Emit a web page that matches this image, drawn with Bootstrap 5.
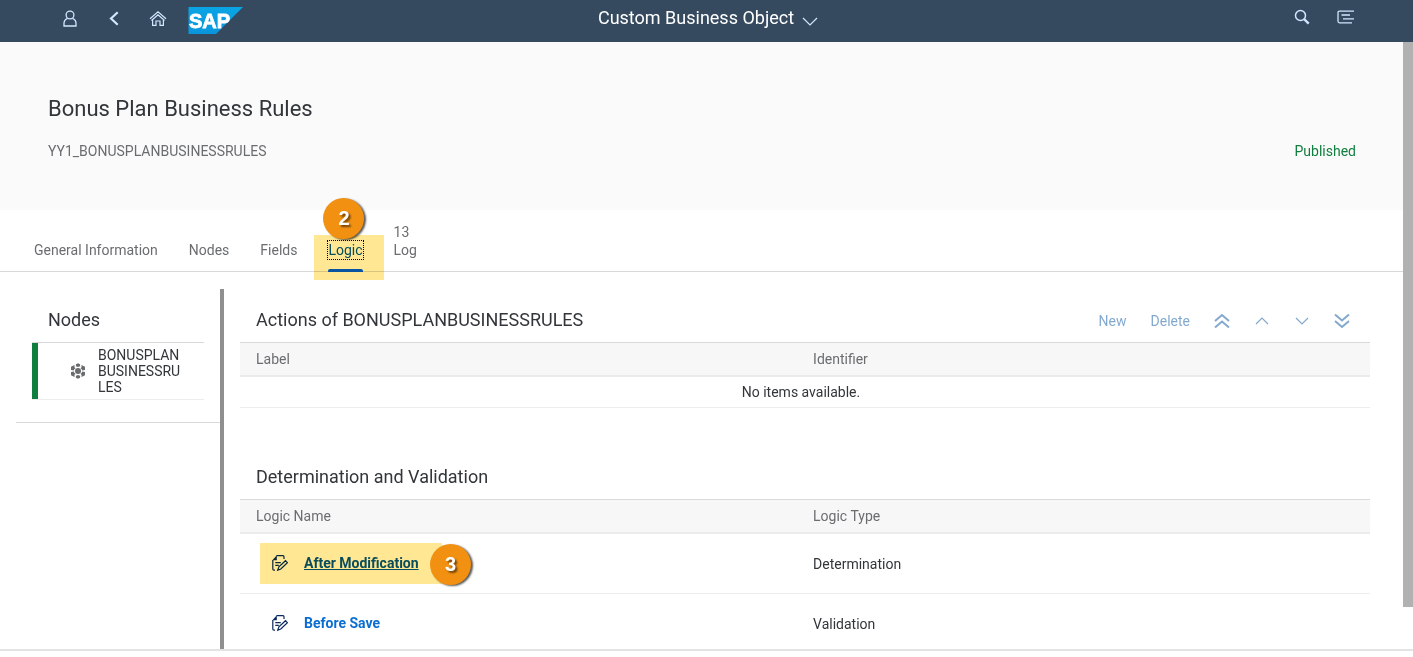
<!DOCTYPE html>
<html lang="en">
<head>
<meta charset="utf-8">
<meta name="viewport" content="width=device-width, initial-scale=1">
<title>Custom Business Object</title>
<link href="https://cdn.jsdelivr.net/npm/bootstrap@5.3.0/dist/css/bootstrap.min.css" rel="stylesheet">
<style>
  body { font-family: Roboto, "Liberation Sans", sans-serif; font-size: 14px; line-height: 18px; color: #32363a; background: #fff; }
  .shell { background: #354a5f; height: 42px; padding: 0 53px 0 56px; color: #d1e8ff; }
  .shell-side { flex: 1 1 0; gap: 16px; }
  .icon-btn { border: 0; background: none; padding: 0; color: inherit; width: 28px; height: 28px; display: flex; align-items: center; justify-content: center; }
  .shell-title { border: 0; background: none; padding: 0 0 6px; color: #fff; font-size: 18px; line-height: 24px; font-weight: 400; }
  .viewport-area { border-bottom: 2px solid #e3e3e3; margin-bottom: 6px; min-height: 0; }
  .scroll-track { width: 10px; }
  .scroll-thumb { height: 93%; background: #b1b1b1; }
  .object-head { background: #fafafa; height: 168px; padding: 53px 47px 0 48px; }
  .object-head h1 { font-size: 22px; line-height: 28px; font-weight: 400; margin: 0 0 19px; }
  .subtle { color: #6a6d70; }
  .state-ok { color: #107e3e; }
  .tabs { height: 62px; padding: 0 34px; gap: 31px; border-bottom: 1px solid #d9d9d9; align-items: flex-end; }
  .tab { color: #6a6d70; text-decoration: none; position: relative; padding-bottom: 12px; display: block; }
  .tab.active { color: #0854a0; }
  .tab.active > span { outline: 1px dotted #000; display: block; }
  .tab.active::after { content: ""; position: absolute; left: 0; right: 0; bottom: -1px; height: 3px; background: #0854a0; border-radius: 2px 2px 0 0; }
  .marker { position: absolute; background: #ffe794; mix-blend-mode: multiply; pointer-events: none; }
  .marker-tab { left: -14px; right: -21px; top: -6px; height: 45px; }
  .marker-row { left: 20px; width: 182px; top: 9px; height: 41px; }
  .step { position: absolute; width: 41px; height: 41px; border-radius: 50%; background: #f29111; color: #fff; font: bold 20px/41px "Liberation Sans", sans-serif; text-align: center; text-shadow: 2px 2px 2px rgba(0,0,0,.55); box-shadow: 2px 1px 2px rgba(0,0,0,.65); }
  .step-tab { left: -5px; top: -43px; }
  .step-row { left: 190px; top: 10px; }
  .work { padding-top: 17px; min-height: 0; overflow: hidden; }
  .pane-left { width: 204px; margin-left: 16px; }
  .pane-nodes { border-bottom: 1px solid #d9d9d9; padding: 0 16px 22px; }
  .section-title { font-size: 18px; line-height: 24px; font-weight: 400; margin: 0; }
  .node-item { border-top: 1px solid #d9d9d9; border-bottom: 1px solid #ededed; height: 58px; color: #32363a; text-decoration: none; line-height: 16px; }
  .node-bar { width: 6px; background: #107e3e; align-self: stretch; }
  .node-icon { margin-left: 32px; }
  .node-name { width: 88px; margin-left: 12px; overflow-wrap: anywhere; }
  .splitter { width: 4px; background: #8f8f8f; }
  .pane-right { padding: 0 33px 0 16px; min-width: 0; }
  .title-row { height: 53px; padding: 8px 16px 0; }
  .tools { gap: 24px; color: #0854a0; opacity: .5; padding-top: 2px; }
  .tools button { border: 0; background: none; padding: 0; color: inherit; line-height: 20px; }
  .tools .arrow { width: 16px; height: 20px; display: flex; align-items: center; justify-content: center; }
  .grid-table { width: 100%; table-layout: fixed; border-collapse: separate; border-spacing: 0; border-top: 1px solid #d9d9d9; }
  .grid-table th { font-weight: 400; color: #6a6d70; background: #f7f7f7; height: 34px; padding: 0 16px; border-bottom: 2px solid #ebebeb; }
  .grid-table th:first-child { width: 49.3%; }
  .grid-table td { padding: 0 16px; border-bottom: 1px solid #ededed; }
  .row-empty td { height: 31px; padding: 0 24px 0 16px; }
  .row-logic td { height: 60px; }
  .row-logic a { font-weight: 700; text-decoration: none; color: #0a6ed1; }
  .row-logic a.hovered { color: #0854a0; text-decoration: underline; }
  .logic-cell { padding: 0 0 2px 16px; gap: 16px; }
  .second { margin-top: 38px; }
</style>
<script src="https://cdn.jsdelivr.net/npm/bootstrap@5.3.0/dist/js/bootstrap.bundle.min.js"></script>
</head>
<body class="vh-100 d-flex flex-column overflow-hidden">
<svg class="d-none" aria-hidden="true">
  <symbol id="edit-doc" viewBox="0 0 16 16"><path d="M4.500.7H11q1 0 1 1v2.300M.8 5v9q0 1.200 1.200 1.200H3" fill="none" stroke="currentColor" stroke-width="1.200"/><path d="M.4 5.300 4.800.3V5.300Z" fill="currentColor"/><path d="M3.300 7.700h5.500M3.300 10.300h3.500M5.700 15.200l1.200-3.300 6.600-6.200 1.900 2-6.600 6.300Z" fill="none" stroke="currentColor" stroke-width="1.200"/></symbol>
</svg>

<header class="shell d-flex align-items-center flex-shrink-0">
  <div class="shell-side d-flex align-items-center pb-1">
    <button class="icon-btn" aria-label="Profile"><svg width="16" height="18" viewBox="0 0 16 18" fill="none" stroke="currentColor" stroke-width="1.300"><circle cx="8" cy="5" r="3.900"/><path d="M5.500 8.300Q2 9.700 2 13.200V16H14V13.200Q14 9.700 10.500 8.300"/></svg></button>
    <button class="icon-btn" aria-label="Back"><svg width="12" height="16" viewBox="0 0 12 16" fill="none" stroke="currentColor" stroke-width="2.200"><path d="M9.700 1.200 3 7.500l6.700 6.300"/></svg></button>
    <button class="icon-btn" aria-label="Home"><svg width="18" height="16" viewBox="0 0 18 16" fill="none" stroke="currentColor" stroke-width="1.200"><path d="M1 7.700 9 .8l8 6.900M2.500 9.500 9 3.800 15.500 9.500M3.600 8.500v5.900H7V10h4v4.400h3.400V8.500"/></svg></button>
    <svg class="mt-1" width="55" height="28" viewBox="0 0 55 28" role="img" aria-label="SAP"><defs><linearGradient id="sapfill" x2="0" y2="1"><stop stop-color="#0aa5e5"/><stop offset="1" stop-color="#0a95dc"/></linearGradient></defs><path d="M.5 0H55L28 27H.5Z" fill="url(#sapfill)"/><text x="1" y="21" fill="#fff" stroke="#fff" stroke-width=".8" font-family="Liberation Sans, sans-serif" font-size="20" font-weight="700">SAP</text></svg>
  </div>
  <button class="shell-title d-flex align-items-center gap-2">Custom Business Object
    <svg width="16" height="10" viewBox="0 0 16 10" fill="none" stroke="#d1e8ff" stroke-width="1.200" class="mt-2"><path d="M1 1 8 8l7-7"/></svg></button>
  <div class="shell-side d-flex align-items-center justify-content-end pb-2">
    <button class="icon-btn" aria-label="Search"><svg width="16" height="16" viewBox="0 0 16 16" fill="none" stroke="currentColor"><circle cx="6.500" cy="6.500" r="5" stroke-width="1.500"/><path d="m10 10 4.700 4.700" stroke-width="2.400"/></svg></button>
    <button class="icon-btn" aria-label="Menu"><svg width="18" height="14" viewBox="0 0 18 14" fill="none" stroke="currentColor" stroke-width="1.300"><path d="M17 1.200H2.500Q1 1.200 1 2.700v8.600q0 1.500 1.500 1.500H15M4.500 5H13M6 8.800h11"/></svg></button>
  </div>
</header>

<div class="viewport-area d-flex flex-grow-1">
  <main class="d-flex flex-column flex-grow-1">
    <section class="object-head flex-shrink-0">
      <h1>Bonus Plan Business Rules</h1>
      <div class="d-flex justify-content-between">
        <span class="subtle">YY1_BONUSPLANBUSINESSRULES</span>
        <span class="state-ok">Published</span>
      </div>
    </section>

    <nav class="tabs d-flex flex-shrink-0" aria-label="Sections">
      <a class="tab" href="#general">General Information</a>
      <a class="tab" href="#nodes">Nodes</a>
      <a class="tab" href="#fields">Fields</a>
      <a class="tab active" href="#logic"><span>Logic</span><i class="marker marker-tab"></i><b class="step step-tab">2</b></a>
      <a class="tab" href="#log">13<br>Log</a>
    </nav>

    <div class="work d-flex flex-grow-1" id="logic">
      <aside class="pane-left flex-shrink-0">
        <div class="pane-nodes">
          <div class="title-row d-flex align-items-center"><h2 class="section-title">Nodes</h2></div>
          <a class="node-item d-flex align-items-center" href="#node">
            <span class="node-bar"></span>
            <svg class="node-icon flex-shrink-0" width="16" height="16" viewBox="0 0 16 16" fill="#6a6d70"><circle cx="8" cy="8" r="3"/><path d="M5.900 1.300 8 .2l2.100 1.100v1.900L8 4 5.900 3.200ZM5.900 12.800 8 12l2.100.8v1.900L8 15.800l-2.100-1.100Z"/><path d="m1 3.700 3.500-1.600v2.200l1 .9-1.400 1.200L3.800 7.500 1 7ZM15 3.700l-3.500-1.600v2.200l-1 .9 1.400 1.200.3 1.100L15 7ZM1 12.300l3.500 1.600v-2.200l1-.9-1.400-1.200-.3-1.100L1 9ZM15 12.300l-3.500 1.600v-2.200l-1-.9 1.400-1.200.3-1.100L15 9Z"/></svg>
            <span class="node-name">BONUSPLANBUSINESSRULES</span>
          </a>
        </div>
      </aside>
      <div class="splitter flex-shrink-0"></div>
      <div class="pane-right flex-grow-1">
        <section>
          <div class="title-row d-flex align-items-center justify-content-between">
            <h2 class="section-title">Actions of BONUSPLANBUSINESSRULES</h2>
            <div class="tools d-flex align-items-center me-1">
              <button>New</button>
              <button>Delete</button>
              <button class="arrow" aria-label="Move to top"><svg width="16" height="16" viewBox="0 0 16 16" fill="none" stroke="currentColor" stroke-width="2"><path d="m1 8 7-6 7 6M1 14.500l7-6 7 6"/></svg></button>
              <button class="arrow" aria-label="Move up"><svg width="14" height="8" viewBox="0 0 14 8" fill="none" stroke="currentColor" stroke-width="1.200"><path d="m1 7 6-6 6 6"/></svg></button>
              <button class="arrow" aria-label="Move down"><svg width="14" height="8" viewBox="0 0 14 8" fill="none" stroke="currentColor" stroke-width="1.200"><path d="m1 1 6 6 6-6"/></svg></button>
              <button class="arrow" aria-label="Move to bottom"><svg width="16" height="16" viewBox="0 0 16 16" fill="none" stroke="currentColor" stroke-width="2"><path d="m1 1.500 7 6 7-6M1 8l7 6 7-6"/></svg></button>
            </div>
          </div>
          <table class="grid-table">
            <thead><tr><th scope="col">Label</th><th scope="col">Identifier</th></tr></thead>
            <tbody><tr class="row-empty"><td colspan="2" class="text-center">No items available.</td></tr></tbody>
          </table>
        </section>
        <section class="second">
          <div class="title-row d-flex align-items-center"><h2 class="section-title">Determination and Validation</h2></div>
          <table class="grid-table">
            <thead><tr><th scope="col">Logic Name</th><th scope="col">Logic Type</th></tr></thead>
            <tbody>
              <tr class="row-logic"><td class="position-relative"><div class="logic-cell d-flex align-items-center"><svg width="16" height="16" color="#0a2a5e"><use href="#edit-doc"/></svg><a class="hovered" href="#after">After Modification</a></div><i class="marker marker-row"></i><b class="step step-row">3</b></td><td>Determination</td></tr>
              <tr class="row-logic"><td><div class="logic-cell d-flex align-items-center"><svg width="16" height="16" color="#0a2a5e"><use href="#edit-doc"/></svg><a href="#before">Before Save</a></div></td><td>Validation</td></tr>
            </tbody>
          </table>
        </section>
      </div>
    </div>
  </main>
  <div class="scroll-track flex-shrink-0"><div class="scroll-thumb"></div></div>
</div>
</body>
</html>
